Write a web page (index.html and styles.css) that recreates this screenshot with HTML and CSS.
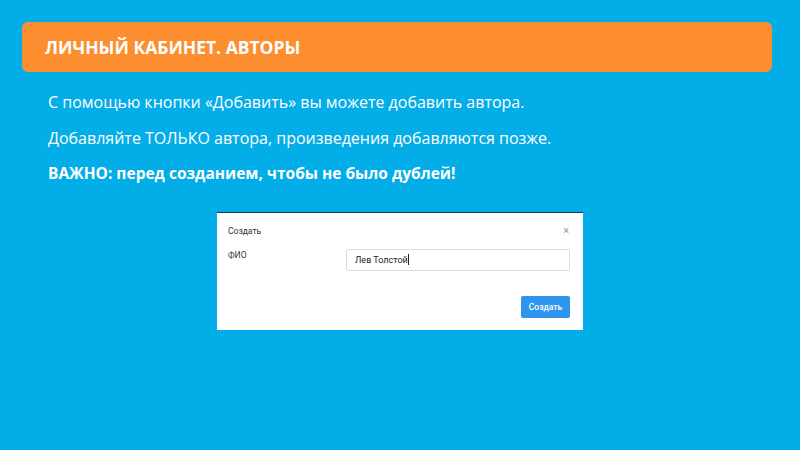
FILE: index.html
```html
<!DOCTYPE html>
<html>
<head>
<meta name="viewport" content="width=device-width, initial-scale=1">
<link rel="stylesheet" href="styles.css">
</head>
<body>

<div class="header">
    <h1>ЛИЧНЫЙ КАБИНЕТ. АВТОРЫ</h1>
</div>

<div class="text">
    <p>С помощью кнопки «Добавить» вы можете добавить автора.</p>
    <p>Добавляйте ТОЛЬКО автора, произведения добавляются позже.</p>
    <p class="important">ВАЖНО: перед созданием, чтобы не было дублей!</p>
</div>

<div class="dialog">
    <div class="dialog-head">
        <span>Создать</span>
        <span class="close">×</span>
    </div>
    <div class="field">
        <label>ФИО</label>
        <div class="input">Лев Толстой<span class="caret"></span></div>
    </div>
    <div class="dialog-foot">
        <button>Создать</button>
    </div>
</div>

</body>
</html>
```

FILE: styles.css
```css
body {
  margin: 0;
  background: #03ade8;
  font-family: "Open Sans", sans-serif;
  color: #fff;
  height: 450px;
  overflow: hidden;
}

/* Orange title bar */
.header {
  margin: 22px 28px 0 22px;
  height: 50px;
  background: #fd8e2f;
  border-radius: 6px;
  display: flex;
  align-items: center;
  padding-left: 23px;
}

.header h1 {
  margin: 0;
  font-size: 17.5px;
  font-weight: 700;
}

.text {
  padding: 13px 0 0 48px;
}

.text p {
  margin: 0;
  font-size: 16px;
  line-height: 35.5px;
}

.text .important {
  font-size: 15.5px;
  font-weight: 700;
}

/* Dialog screenshot */
.dialog {
  width: 366px;
  height: 118px;
  margin: 20px auto 0;
  background: #fff;
  border-top: 1px solid #1d3a4a;
  font-family: Roboto, sans-serif;
  color: #333;
  font-size: 8.5px;
  box-sizing: border-box;
  padding: 0 13px 0 11px;
}

.dialog-head {
  display: flex;
  justify-content: space-between;
  align-items: center;
  height: 36px;
}

.close {
  color: #999;
  font-size: 11px;
  margin-right: 1px;
}

.field {
  display: flex;
  align-items: flex-start;
}

.field label {
  width: 118px;
  padding-top: 1px;
}

.input {
  flex: 1;
  height: 22px;
  border: 1px solid #ddd;
  border-radius: 2px;
  box-sizing: border-box;
  padding-left: 8px;
  display: flex;
  align-items: center;
  color: #222;
  font-size: 9px;
}

.caret {
  display: inline-block;
  width: 1px;
  height: 11px;
  background: #222;
}

.dialog-foot {
  display: flex;
  justify-content: flex-end;
  margin-top: 25px;
}

.dialog-foot button {
  width: 49px;
  height: 22px;
  border: none;
  border-radius: 2px;
  background: #2f95ec;
  color: #fff;
  font-family: Roboto, sans-serif;
  font-size: 8.5px;
  font-weight: 500;
  padding: 0;
}
```
